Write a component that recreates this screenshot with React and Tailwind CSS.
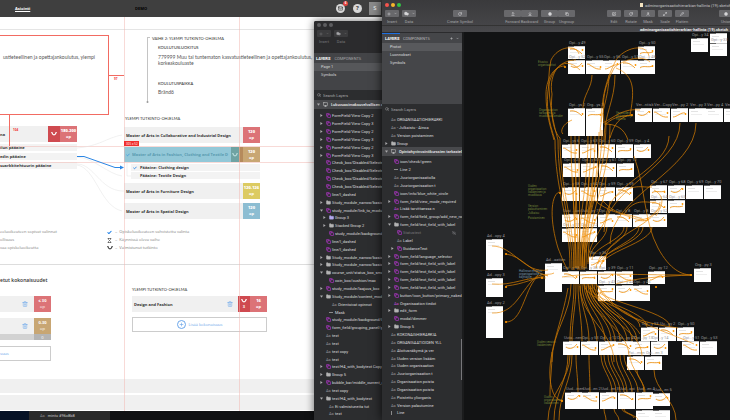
import clsx from 'clsx';
import {
  ArrowDownToLine,
  ArrowUpFromLine,
  Check,
  ChevronDown,
  Cloud,
  Copy,
  EyeOff,
  Folder,
  Hourglass,
  Mail,
  Maximize2,
  Monitor,
  Pencil,
  Plus,
  RotateCw,
  Search,
  SquarePen,
  Squircle,
  Trash2,
  User
} from 'lucide-react';

const ROW_TONES = {
  red: 'bg-[#dc7377]',
  tan: 'bg-[#c8a673]',
  yellow: 'bg-[#dccb62]',
  blue: 'bg-[#8cbdd2]'
};

// [level, kind, name, arrow]
const backLayers = [
  [0, 'symbol', 'FormField/View Copy 2', 'closed'],
  [0, 'symbol', 'FormField/View Copy 3', 'closed'],
  [0, 'symbol', 'FormField/View Copy 2', 'closed'],
  [0, 'symbol', 'FormField/View Copy 3', 'closed'],
  [0, 'symbol', 'FormField/View Copy 2', 'closed'],
  [0, 'symbol', 'FormField/View Copy 3', 'closed'],
  [0, 'symbol', 'Check_box/Disabled/Selected'],
  [0, 'symbol', 'Check_box/Disabled/Selected'],
  [0, 'symbol', 'Check_box/Disabled/Selected'],
  [0, 'symbol', 'Check_box/Disabled/Selected'],
  [0, 'symbol', 'line/l_dashed'],
  [0, 'folder', 'Study_module_narrow/basic', 'closed'],
  [0, 'symbol', 'study_module/link_to_module', 'open'],
  [1, 'violet', 'Group 3', 'closed'],
  [1, 'folder', 'Stacked Group 2', 'closed'],
  [1, 'symbol', 'study_module/background/bg'],
  [0, 'symbol', 'line/l_dashed'],
  [0, 'symbol', 'line/l_dashed'],
  [0, 'folder', 'Study_module_narrow/basic', 'closed'],
  [0, 'folder', 'Study_module_narrow/basic', 'closed'],
  [0, 'folder', 'course_unit/status_box_small', 'open'],
  [1, 'symbol', 'coin_box/cushion/max'],
  [0, 'symbol', 'study_module/laajuus_box', 'closed'],
  [0, 'folder', 'Study_module/content_module', 'open'],
  [2, 'text', 'Orientoivat opinnot'],
  [1, 'line', 'Mask'],
  [0, 'symbol', 'study_module/background/bg_'],
  [0, 'symbol', 'form_field/grouping_panel/gr'],
  [0, 'text', 'text'],
  [0, 'text', 'text'],
  [0, 'text', 'text copy'],
  [0, 'text', 'text'],
  [0, 'symbol', 'text/H4_with_bodytext Copy', 'closed'],
  [0, 'folder', 'Group 5', 'closed'],
  [0, 'symbol', 'bubble_bar/middle_current_ab', 'closed'],
  [0, 'text', 'text copy'],
  [0, 'folder', 'text/H4_with_bodytext', 'open'],
  [1, 'text', 'Ei valmistuneita tut'],
  [1, 'text', 'text']
];

const frontTopLayers = [
  [0, 'text', 'ORGANISAATIOHIERARKI'],
  [0, 'text', '- Julkaistu - Ainoa'],
  [0, 'text', 'Version poistaminen'],
  [0, 'folder', 'Group', 'closed']
];

const frontLayers = [
  [1, 'symbol', 'icon/check/green'],
  [1, 'line', 'Line 2'],
  [1, 'text', 'Juuriorganisaatiolla'],
  [1, 'text', 'Juuriorganisaation t'],
  [1, 'symbol', 'icon/info/blue_white_circle'],
  [1, 'symbol', 'form_field/view_mode_required', 'closed'],
  [1, 'purpleText', 'Lisää tarvittaessa n'],
  [1, 'symbol', 'form_field/field_group/add_new_row', 'closed'],
  [1, 'folder', 'form_field/text_field_with_label', 'open'],
  [2, 'symbol', 'Statustext', 'hidden'],
  [2, 'text', 'Label'],
  [2, 'symbol', 'GuidanceText', 'closed'],
  [1, 'symbol', 'form_field/language_selector', 'closed'],
  [1, 'symbol', 'form_field/text_field_with_label', 'closed'],
  [1, 'symbol', 'form_field/text_field_with_label', 'closed'],
  [1, 'symbol', 'form_field/text_field_with_label', 'closed'],
  [1, 'symbol', 'form_field/text_field_with_label', 'closed'],
  [1, 'symbol', 'button/icon_button/primary_naked', 'closed'],
  [1, 'purpleText', 'Organisaation tiedot'],
  [1, 'folder', 'edit_form', 'closed'],
  [1, 'symbol', 'modal/dimmer'],
  [1, 'folder', 'Group 5', 'closed'],
  [0, 'text', 'KOKONAISHIERARKIA'],
  [0, 'text', 'ORGANISAATIOIDEN YLL'],
  [0, 'text', 'Aloitusnäkymä ja ver'],
  [0, 'text', 'Uuden version lisääm'],
  [0, 'text', 'Uuden organisaation'],
  [0, 'text', 'Juuriorganisaation t'],
  [0, 'text', 'Organisaation poista'],
  [0, 'text', 'Organisaation poista'],
  [0, 'text', 'Poistettu yliorganis'],
  [0, 'text', 'Version palautumine'],
  [0, 'bar', 'Line']
];

// [x, y, height, label]
const artboards = [
  [104, 14, 13, 'Opi...y 49'], [174, 14, 13, 'Opi...y 50'],
  [104, 28, 14, 'Opi...y 52'], [122, 28, 14, 'Opi...y 55'], [139, 28, 14, 'Opi...y 56'],
  [157, 28, 14, 'Opi...y 57'], [174, 28, 14, 'Opi...y 48'],
  [227, 6, 14, 'Opi...y 34'], [246, 1, 23, ''], [246, 11, 13, 'Opi...y 33'],
  [104, 76, 28, 'Opi...ys 2'], [122, 76, 28, 'Org...ys 3'],
  [171, 76, 14, 'Ver...ntisk'], [189, 76, 14, 'Ver...Copy'], [207, 76, 14, 'Ver...py 2'],
  [225, 76, 14, 'Ver...py 3'], [242, 76, 14, 'Ver...py 4'], [260, 76, 14, 'Ver'],
  [98, 112, 14, 'Opi...ys 6'], [116, 112, 14, 'Opi...y 63'], [134, 112, 14, 'Opi...y 60'],
  [152, 112, 14, 'Opi...y 59'], [170, 112, 14, 'Opi...y 4'],
  [99, 131, 14, 'Opi...y 27'], [117, 131, 14, 'Opi...y 60'], [135, 131, 14, 'Opi...y 61'],
  [153, 131, 14, 'Opi...py 12'],
  [98, 155, 14, 'Opi...y 58'], [116, 155, 14, 'Opi...y 64'], [134, 155, 14, 'Opi...y 59'],
  [152, 155, 14, 'Opi...y 59'],
  [186, 153, 14, 'Opi...y 67'], [204, 153, 14, 'Opi...y 68'], [222, 153, 14, 'Opi...y 69'],
  [240, 153, 14, 'Opi...y 70'],
  [186, 168, 13, 'Opi...y 64'], [204, 168, 13, 'Opi...y 65'],
  [98, 182, 13, 'Uusi ...ion'], [116, 182, 13, 'Uud...py 7'], [134, 182, 13, 'Opi...y 7'],
  [151, 182, 13, 'Opi...y 8'], [169, 182, 13, 'Opi...y 8'], [186, 182, 13, 'Opi...y 52'],
  [98, 196, 14, 'Opi...y 11'], [116, 196, 14, 'Opi...y 12'],
  [22, 207, 31, 'Ad...opy 4'], [22, 246, 19, 'Ad...opy 3'], [22, 274, 32, 'Ad...opy 2'],
  [81, 231, 29, 'Ad...aation'], [125, 224, 14, 'Opi...y 36'],
  [98, 239, 13, 'Opi...y 58'], [116, 239, 13, 'Opi...y 38'], [134, 239, 13, 'Opi...y 39'],
  [152, 239, 13, 'Opi...y 11'], [184, 239, 13, 'Opi...py 12'], [230, 236, 14, 'Org...py 3'],
  [134, 253, 16, 'Opi...y 43'], [152, 253, 16, 'Opi...y 44'], [169, 253, 16, 'Opi...y 45'],
  [177, 295, 14, 'Opi...y 53'], [195, 295, 14, 'Uu...py 2'], [213, 295, 14, 'Opi...y 50'],
  [99, 309, 14, 'Uuta...nen'], [117, 309, 14, 'Opi...y 53'], [135, 309, 14, 'Opi...y 12'],
  [152, 309, 14, 'Opi...py 47'], [169, 309, 14, 'Opi...py 13'], [187, 309, 14, 'Opi...y 14'],
  [218, 309, 14, 'Opi...y 51'], [236, 309, 14, 'Opi...y 53'],
  [163, 324, 14, 'Poi...men'], [181, 324, 14, 'Opi...en 3'],
  [101, 360, 17, 'Uud...inen'], [118, 360, 17, 'Uud...en 2'], [136, 360, 17, 'Uud...en 3'],
  [154, 360, 17, 'Uud...opi'], [172, 360, 17, 'Uud...en 4'], [189, 361, 13, 'Uud...en 5'],
  [172, 378, 14, ''], [189, 378, 14, '']
];

const notes = [
  [74, 29, 'green', 'Etusivu\norganisaatiot'],
  [75, 77, 'green', 'Organisaation\ntarkastelu ja\nmuokkauslomake'],
  [152, 80, 'green', 'Versioiden\ntarkastelu ja\nhallinta'],
  [64, 153, 'green', 'Uuden\norganisaation\nlisääminen ja\nmuokkaus'],
  [64, 173, 'green', 'Version\npalauttaminen'],
  [64, 180, 'green', 'Julkaisu'],
  [64, 185, 'green', 'Poistaminen'],
  [55, 238, 'blue', 'Hallinnan etusivu\norganisaatioille ja\nkäyttäjille'],
  [73, 309, 'green', 'Uuden version\nlisääminen'],
  [80, 364, 'green', 'Uuden\norganisaation\nlisääminen']
];

// x1, y1, x2, y2
const links = [
  [91, 108, 106, 236], [94, 108, 108, 238], [96, 106, 110, 238], [107, 104, 112, 236],
  [111, 104, 114, 238], [115, 104, 116, 238], [124, 104, 114, 236], [127, 104, 118, 238],
  [131, 104, 120, 236], [135, 100, 122, 236], [138, 98, 118, 234], [142, 90, 120, 238],
  [146, 92, 124, 232], [128, 43, 119, 76], [145, 43, 136, 104], [151, 43, 140, 108],
  [112, 145, 110, 236], [109, 145, 112, 236], [125, 145, 116, 234], [129, 145, 118, 236],
  [142, 145, 120, 234], [146, 169, 124, 230], [143, 195, 126, 226], [160, 195, 128, 228],
  [163, 195, 134, 232], [175, 195, 138, 232], [188, 195, 136, 236], [179, 195, 132, 236],
  [216, 91, 140, 200], [232, 91, 146, 212], [205, 104, 142, 186], [196, 170, 142, 226],
  [107, 252, 88, 330], [110, 252, 106, 309], [112, 252, 108, 309], [114, 252, 118, 309],
  [116, 252, 125, 309], [118, 252, 133, 309], [120, 252, 141, 309], [122, 252, 147, 309],
  [124, 252, 151, 309], [126, 252, 156, 309], [128, 252, 163, 309], [130, 252, 168, 309],
  [132, 252, 173, 309], [120, 252, 176, 295], [124, 252, 183, 295], [128, 252, 206, 295],
  [116, 254, 150, 330], [122, 254, 165, 324], [126, 254, 178, 324],
  [104, 323, 90, 388], [108, 323, 95, 388], [106, 323, 84, 388], [88, 320, 86, 364],
  [112, 323, 114, 360], [125, 323, 126, 360], [137, 323, 148, 360], [140, 323, 152, 360],
  [144, 323, 156, 360], [147, 323, 160, 360], [152, 323, 163, 360], [156, 323, 168, 360],
  [160, 323, 174, 360], [166, 323, 180, 360], [173, 338, 181, 360], [190, 338, 212, 388],
  [140, 377, 142, 388], [150, 377, 155, 388], [158, 377, 170, 386], [160, 377, 174, 388]
];

const curves = [
  'M115 22C112 12 94 14 87 28C82 48 86 80 94 108',
  'M112 28C98 28 88 38 85 52C81 74 85 90 91 108',
  'M101 34C88 34 82 50 82 62C82 84 87 96 90 108',
  'M116 38C98 20 84 42 88 62C86 84 90 100 96 106',
  'M185 24C182 10 160 16 152 28C144 44 138 60 137 90',
  'M186 30C178 22 158 28 150 36C140 56 138 66 140 90',
  'M152 36C172 44 170 60 166 84',
  'M142 92C150 84 160 84 168 83',
  'M139 91C152 84 160 76 176 78',
  'M140 92C152 92 160 96 164 108',
  'M146 106C150 92 156 84 168 83',
  'M99 102C96 100 98 92 108 88',
  'M95 160C86 164 86 190 94 216C98 226 100 232 104 238',
  'M42 222C58 224 66 240 84 244',
  'M28 214C50 214 60 242 84 238',
  'M28 252C50 254 62 244 82 246',
  'M42 254C60 252 70 246 84 243',
  'M42 290C58 290 60 260 72 246',
  'M28 281C52 282 56 258 74 243',
  'M72 246C78 240 84 244 90 241',
  'M170 124C182 158 180 190 194 216C206 238 218 243 228 243',
  'M152 252C170 246 200 244 228 243',
  'M98 245C130 240 160 243 226 243',
  'M130 168C144 180 160 182 172 187C186 190 190 180 196 176',
  'M138 168C154 186 164 180 180 188',
  'M150 166C170 150 178 156 188 155',
  'M160 182C172 164 184 172 192 170',
  'M190 158C204 166 196 176 192 184',
  'M132 252C150 282 172 290 214 296',
  'M134 254C160 290 190 294 230 312',
  'M126 254C146 290 164 282 176 302',
  'M104 256C98 290 84 320 86 346C88 366 94 368 99 369'
];

const screenCurves = [
  'M2 3C7 2 11 5 14 8',
  'M2 8C5 5 10 8 15 6',
  'M3 6C7 9 11 7 14 3',
  'M1 4C5 4 8 10 15 9',
  'M2 9C6 9 10 4 14 5'
];

function Fold({ state }) {
  return (
    <svg viewBox="0 0 4 4" className="size-[3px] shrink-0 fill-[#a9a9ab]">
      {state === 'closed' && <path d="M0.5 0L3.5 2L0.5 4Z" />}
      {state === 'open' && <path d="M0 0.5H4L2 3.7Z" />}
    </svg>
  );
}

function LayerIcon({ kind }) {
  if (kind === 'symbol') return <Copy className="size-[5px] text-[#9a35ae]" strokeWidth={4} />;
  if (kind === 'folder') return <Folder className="size-[5px] fill-[#b3b3b3] text-[#b3b3b3]" />;
  if (kind === 'violet') return <Folder className="size-[5px] fill-[#b3a9f0] text-[#b3a9f0]" />;
  if (kind === 'line') return <span className="h-px w-[4px] bg-[#8b8b8b]" />;
  if (kind === 'bar') return <span className="h-[4px] w-px bg-[#8b8b8b]" />;
  return <span className={kind === 'purpleText' ? 'text-[#c04ad4]' : 'text-[#939396]'}>Aa</span>;
}

function LayerList({ items, className }) {
  return (
    <ul className={clsx('flex flex-col', className)}>
      {items.map(([level, kind, name, state], i) => (
        <li
          key={i}
          className={clsx(
            'flex min-h-0 flex-1 items-center whitespace-nowrap',
            level === 0 && 'pl-[3px]',
            level === 1 && 'pl-[6px]',
            level === 2 && 'pl-[9px]',
            state === 'hidden' ? 'text-[#77777a]' : 'text-[#dcdcde]'
          )}
        >
          <Fold state={state} />
          <span className="ml-[3px] flex w-[6px] shrink-0 items-center">
            <LayerIcon kind={kind} />
          </span>
          <span>{name}</span>
          {state === 'hidden' && <EyeOff className="mr-[6px] ml-auto size-[4px]" strokeWidth={3} />}
        </li>
      ))}
    </ul>
  );
}

function ArtboardTitle({ name }) {
  return (
    <div className="flex h-[9px] shrink-0 items-center bg-[#48494c] pl-[3px] font-medium whitespace-nowrap text-[#ececec]">
      <Fold state="open" />
      <Monitor className="mx-[3px] size-[5px] shrink-0" strokeWidth={2} />
      {name}
    </div>
  );
}

function SearchLayers({ id }) {
  return (
    <label htmlFor={id} className="flex h-[10px] shrink-0 items-center gap-[2px] pl-[3px] text-[#9c9c9f]">
      <Search className="size-[4px]" strokeWidth={3} />
      <input
        id={id}
        type="search"
        placeholder="Search Layers"
        className="w-[60px] bg-transparent outline-none placeholder:text-[#a8a8ab]"
      />
    </label>
  );
}

function ToolButton({ label, wide, dim, children }) {
  return (
    <button
      type="button"
      className={clsx('flex flex-col items-center gap-[2px]', dim ? 'text-[#77777a]' : 'text-[#a5a5a8]')}
    >
      <span
        className={clsx(
          'flex h-[7px] items-center justify-center gap-[3px] rounded-[1px]',
          wide ? 'w-[17px]' : 'w-[14px]',
          dim ? 'bg-[#3b3b3d]' : 'bg-[#68686b] text-[#d6d6d8]'
        )}
      >
        {children}
      </span>
      <span className="h-[5px] w-0 text-center">
        <span className="flex justify-center whitespace-nowrap">{label}</span>
      </span>
    </button>
  );
}

function Credits({ value, tone }) {
  return (
    <span
      className={clsx(
        'flex w-[17px] shrink-0 flex-col items-center justify-center self-stretch leading-[6px] text-white',
        ROW_TONES[tone]
      )}
    >
      <b className="whitespace-nowrap">{value}</b>
      <span>op</span>
    </span>
  );
}

function Cap() {
  return (
    <svg viewBox="0 0 6 4" className="h-[4px] w-[6px] fill-none stroke-current">
      <path d="M0 0.8H1.2C1.5 3.6 4.5 3.6 4.8 0.8H6" strokeWidth="1.1" />
    </svg>
  );
}

function Programme({ name, value, tone }) {
  return (
    <li className="flex h-[16px] items-center bg-[#f0f0f0] pl-[2px] font-bold text-[#333]">
      <span className="flex-1 whitespace-nowrap">{name}</span>
      <Credits value={value} tone={tone} />
    </li>
  );
}

function AddButton({ children }) {
  return (
    <button
      type="button"
      className="flex h-[15px] w-full items-center justify-center gap-[3px] border border-[#ccc] text-[#6ba6ea]"
    >
      {children}
    </button>
  );
}

function PortalHeader() {
  return (
    <header className="flex h-[17px] shrink-0 items-center bg-[#3f3f3f] pl-[15px] text-[4px] text-white">
      <a href="#asiointi" className="w-[120px] font-bold underline">
        Asiointi
      </a>
      <span className="w-[201px] font-bold text-black">DEMO</span>
      <button
        type="button"
        aria-label="Viestit"
        className="relative flex size-[9px] items-center justify-center rounded-full bg-[#d8d8d8] text-[#3f3f3f]"
      >
        <Mail className="size-[5px]" strokeWidth={3} />
        <span className="absolute -top-[3px] -right-[3px] flex size-[5px] items-center justify-center rounded-full bg-[#e2443f] text-[3px] font-bold text-white">
          6
        </span>
      </button>
      <button
        type="button"
        className="ml-[8px] flex size-[9px] items-center justify-center rounded-full bg-[#d8d8d8] text-[6px] font-bold text-[#3f3f3f]"
      >
        ?
      </button>
      <span className="ml-[7px] flex h-[13px] w-[12px] items-center justify-center bg-[#8b8b8b] text-[6px]">S</span>
    </header>
  );
}

function StudyRight() {
  return (
    <section className="grid grid-cols-[124px_136px_1fr] border-t border-[#e5e5e5]">
      <div className="pt-[5px]">
        <div className="flex h-[80px] w-[109px] items-start justify-end border border-l-0 border-[#f26b62] pt-[18px] pr-[13px] font-[Lato,sans-serif] text-[5px] leading-[6px] whitespace-nowrap">
          ustieteellinen ja opettajankoulutus, ylempi
        </div>
        <ul className="mt-[11px] flex w-[77px] flex-col gap-[2px] font-bold text-[#333]">
          <li className="flex h-[16px] items-center bg-[#f0f0f0]">
            <span className="flex-1">na</span>
            <span className="flex w-[12px] items-center justify-center self-stretch bg-[#cf4a50] text-white">
              <Cap />
            </span>
            <Credits value="180-200" tone="red" />
          </li>
          <li className="h-[7px] bg-[#f3f3f3] leading-[7px] whitespace-nowrap">ilun pääaine</li>
          <li className="h-[7px] bg-[#f3f3f3] leading-[7px] whitespace-nowrap">edin pääaine</li>
          <li className="h-[7px] bg-[#f3f3f3] leading-[7px] whitespace-nowrap">suarkkitehtuurin pääaine</li>
        </ul>
      </div>

      <div className="pt-[7px]">
        <div className="ml-[23px] h-[65px] border-l border-[#c4c4c4] pl-[4px] font-[Lato,sans-serif] whitespace-nowrap text-[#333]">
          <h2 className="leading-[4px]">VAIHE 2: YLEMPI TUTKINTO-OHJELMA</h2>
          <dl className="pl-[6px]">
            <dt className="mt-[4px] leading-[6px] font-medium">KOULUTUSLUOKITUS</dt>
            <dd className="mt-[3px] text-[5px] leading-[6px] text-[#555]">
              779999 Muu tai tuntematon kasvatustieteellinen ja opettajankoulutus,
              <br />
              korkeakouluaste
            </dd>
            <dt className="mt-[15px] leading-[6px] font-medium">KOULUTUSPAIKKA</dt>
            <dd className="mt-[2px] text-[5px] leading-[6px] text-[#555]">Brändö</dd>
          </dl>
        </div>
        <h3 className="mt-[14px] pl-px font-[Lato,sans-serif] leading-[6px] text-[#333]">YLEMPI TUTKINTO-OHJELMA</h3>
        <ul className="mt-[5px] flex flex-col gap-[4px]">
          <Programme name="Master of Arts in Collaborative and Industrial Design" value="120" tone="red" />
          <li>
            <div className="flex h-[15px] items-center bg-[#93c8d8] pl-[2px] font-bold text-[#5a9bb0]">
              <Check className="mr-[2px] size-[4px] shrink-0 text-[#2f8fe0]" strokeWidth={4} />
              <span className="min-w-0 flex-1 overflow-hidden whitespace-nowrap">
                Master of Arts in Fashion, Clothing and Textile D
              </span>
              <span className="flex w-[8px] items-center justify-center self-stretch bg-[#6fa3a3] text-[#b9dcdc]">
                <Cap />
              </span>
              <span className="w-[4px] self-stretch bg-[#b58a5c]" />
              <Credits value="120" tone="tan" />
            </div>
            <ul className="mt-[2px] ml-[7px] flex flex-col gap-px font-bold text-[#333]">
              <li className="flex h-[7px] items-center gap-[3px] bg-[#f3f3f3] pl-[2px]">
                <Check className="size-[4px] text-[#1b7fe8]" strokeWidth={5} />
                Pääaine: Clothing design
              </li>
              <li className="flex h-[7px] items-center bg-[#f3f3f3] pl-[9px]">Pääaine: Textile Design</li>
            </ul>
          </li>
          <Programme name="Master of Arts in Furniture Design" value="120-126" tone="yellow" />
          <Programme name="Master of Arts in Spatial Design" value="120" tone="blue" />
        </ul>
      </div>
    </section>
  );
}

function Legend() {
  return (
    <section className="grid grid-cols-[107px_1fr] border-b border-[#ddd] pt-[9px] pb-[12px] leading-[8px] text-[#7d7d7d]">
      <ul className="whitespace-nowrap">
        <li>eeluoikeuteen sopivat valinnat</li>
        <li>ollisuus</li>
        <li>vaa opiskeluoikeutta</li>
      </ul>
      <ul>
        <li className="flex items-center">
          <Check className="size-[5px] text-[#1b7fe8]" strokeWidth={5} />
          <span className="ml-[3px]">= &nbsp;Opiskeluoikeuteen vahvistettu valinta</span>
        </li>
        <li className="flex items-center">
          <Hourglass className="size-[5px] text-[#444]" strokeWidth={3} />
          <span className="ml-[3px]">= &nbsp;Käynnissä oleva vaihe</span>
        </li>
        <li className="flex items-center">
          <span className="w-[5px] text-[#444]">
            <Cap />
          </span>
          <span className="ml-[3px]">= &nbsp;Valmistunut tutkinto</span>
        </li>
      </ul>
    </section>
  );
}

function Modules() {
  return (
    <section className="grid h-[114px] grid-cols-[132px_135px] pt-[12px]">
      <div className="w-[51px]">
        <h2 className="h-[19px] text-[5px] leading-[6px] font-semibold whitespace-nowrap text-[#333]">
          etut kokonaisuudet
        </h2>
        <div className="flex h-[16px] items-center bg-[#f0f0f0]">
          <button type="button" aria-label="Poista" className="ml-[22px] flex-1 text-[#6ba6ea]">
            <Trash2 className="size-[6px]" />
          </button>
          <Credits value="≤ 30" tone="red" />
        </div>
        <div className="mt-[6px] flex h-[16px] items-center bg-[#f0f0f0]">
          <button type="button" aria-label="Poista" className="ml-[22px] flex-1 text-[#6ba6ea]">
            <Trash2 className="size-[6px]" />
          </button>
          <Credits value="0-30" tone="tan" />
        </div>
        <div className="mb-[6px] flex h-[6px] justify-end bg-[#d2d2d2]">
          <span className="flex w-[17px] items-center justify-center bg-[#b4b4b4] text-white">0</span>
        </div>
        <button
          type="button"
          className="h-[15px] w-full border border-l-0 border-[#ccc] text-left text-[#6ba6ea]"
        >
          suus
        </button>
      </div>
      <div className="pt-[10px]">
        <h3 className="font-[Lato,sans-serif] leading-[6px] text-[#333]">YLEMPI TUTKINTO-OHJELMA</h3>
        <div className="mt-[3px] mb-[5px] flex h-[16px] items-center bg-[#f0f0f0] pl-[2px] font-bold text-[#333]">
          <span className="flex-1">Design and Fashion</span>
          <button type="button" aria-label="Poista" className="mr-[5px] text-[#6ba6ea]">
            <Trash2 className="size-[6px]" />
          </button>
          <span className="flex w-[12px] flex-col items-center justify-center gap-px self-stretch bg-[#cf4a50] leading-[5px] text-white">
            <Cap />
            <span>3</span>
          </span>
          <Credits value="16" tone="red" />
        </div>
        <AddButton>
          <span className="flex size-[9px] items-center justify-center rounded-full border border-[#6ba6ea]">
            <Plus className="size-[5px]" strokeWidth={3} />
          </span>
          Lisää kokonaisuus
        </AddButton>
      </div>
    </section>
  );
}

// Spec guides and dimensions laid over the portal page
function Guides() {
  return (
    <svg className="pointer-events-none absolute inset-0 size-full fill-none">
      <g stroke="#f2b5b0" strokeWidth="1" opacity="0.5">
        <path d="M124.5 17V411M239.5 17V411M0 146.5H330M0 162.5H330" />
      </g>
      <g stroke="#f26b62">
        <path d="M108 75.5H124M9.5 115V146" />
      </g>
      <g stroke="#e3e3e3" strokeWidth="0.5">
        <path d="M77 148C100 146 106 138 122 135M77 164C94 164 100 190 122 191M77 165C96 168 100 206 122 211M77 157C94 158 108 174 122 176M127 163V176H131M122 191H124" />
      </g>
      <path d="M77 156.5H84L115 167.5H121" stroke="#2b86e4" />
      <path d="M120 165.5L124 167.5L120 169.5Z" className="fill-[#2b86e4]" />
      <circle cx="147.5" cy="102" r="1" className="fill-[#999]" />
      <path d="M148 37.5H150" stroke="#c4c4c4" />
      <rect x="124" y="141" width="15" height="5" className="fill-[#f02e2e]" />
      <text x="126" y="145" className="fill-white text-[3px]">365 x 52</text>
      <text x="114" y="80" className="fill-[#f02e2e] text-[3px] font-bold">97</text>
      <text x="13" y="131" className="fill-[#f02e2e] text-[3px] font-bold">104</text>
    </svg>
  );
}

function Portal() {
  return (
    <main className="absolute top-0 left-0 flex w-full flex-col bg-white font-['Open_Sans',sans-serif] text-[4px] leading-[5px] text-[#555]">
      <PortalHeader />
      <div className="h-[12px]" />
      <StudyRight />
      <Legend />
      <Modules />
      <footer className="flex flex-col gap-[2px] pb-px">
        <div className="h-[14px] bg-[#f0f0f0]" />
        <div className="h-[15px] bg-[#f0f0f0]" />
      </footer>
      <Guides />
    </main>
  );
}

function BackWindow() {
  return (
    <aside className="absolute top-[21px] right-0 bottom-0 left-[314px] flex flex-col overflow-hidden rounded-tl-[2px] bg-[#2c2d2f] shadow-[0_0_8px_rgba(0,0,0,0.6)]">
      <div className="flex h-[32px] shrink-0 flex-col bg-[#2b2b2d] pl-[3px]">
        <div className="flex gap-[2px] pt-[2px] pb-[3px]">
          <i className="size-[4px] rounded-full bg-[#5d5d5f]" />
          <i className="size-[4px] rounded-full bg-[#5d5d5f]" />
          <i className="size-[4px] rounded-full bg-[#5d5d5f]" />
        </div>
        <div className="flex gap-[3px]">
          <ToolButton label="Insert" dim>
            <Plus className="size-[4px]" strokeWidth={3} />
            <ChevronDown className="size-[3px]" strokeWidth={3} />
          </ToolButton>
          <ToolButton label="Data" dim>
            <Cloud className="size-[5px] fill-[#a5a5a8]" />
            <ChevronDown className="size-[3px]" strokeWidth={3} />
          </ToolButton>
        </div>
      </div>
      <div className="h-[37px] shrink-0 bg-[#434447] text-[#d4d4d6]">
        <div className="flex h-[10px] items-center gap-[4px] pl-[2px]">
          <button type="button" className="font-bold text-white">LAYERS</button>
          <button type="button" className="text-[#a5a5a8]">COMPONENTS</button>
        </div>
        <ul className="leading-[8px]">
          <li className="bg-[#56575a] pl-[7px]">Page 1</li>
          <li className="pl-[7px]">Symbols</li>
        </ul>
      </div>
      <SearchLayers id="search-back" />
      <ArtboardTitle name="Lukuvuosimaksuvelvollisen opi" />
      <LayerList items={backLayers} className="mt-[3px] mb-[2px] min-h-0 flex-1 pl-[3px]" />
    </aside>
  );
}

function Toolbar() {
  return (
    <header className="h-[32px] shrink-0 bg-linear-to-b from-[#3a3a3c] to-[#48484b]">
      <div className="flex h-[10px] items-center gap-[2px] overflow-hidden pl-[3px]">
        <i className="size-[4px] rounded-full bg-[#f5544d]" />
        <i className="size-[4px] rounded-full bg-[#f7b52c]" />
        <i className="size-[4px] rounded-full bg-[#31c544]" />
        <span className="ml-auto h-[4px] w-[3px] shrink-0 bg-[#f4e3c0]" />
        <span className="w-[85px] shrink-0 text-[4px] whitespace-nowrap text-[#c6c6c8]">
          adminorganisaatiohierarkian-hallinta (19).sketch
        </span>
      </div>
      <nav className="flex h-[15px] overflow-hidden pl-[3px]">
        <div className="flex gap-[3px]">
          <ToolButton label="Insert">
            <Plus className="size-[4px]" strokeWidth={3} />
            <ChevronDown className="size-[3px]" strokeWidth={3} />
          </ToolButton>
          <ToolButton label="Data">
            <Cloud className="size-[5px] fill-current" />
            <ChevronDown className="size-[3px]" strokeWidth={3} />
          </ToolButton>
        </div>
        <div className="ml-[37px]">
          <ToolButton label="Create Symbol">
            <RotateCw className="size-[4px]" strokeWidth={3} />
          </ToolButton>
        </div>
        <div className="ml-[37px] flex">
          <ToolButton label="Forward" wide>
            <ArrowUpFromLine className="size-[4px]" strokeWidth={3} />
          </ToolButton>
          <ToolButton label="Backward" wide>
            <ArrowDownToLine className="size-[4px]" strokeWidth={3} />
          </ToolButton>
          <div className="ml-[3px] flex">
            <ToolButton label="Group" wide>
              <Squircle className="size-[4px] fill-current" />
            </ToolButton>
            <ToolButton label="Ungroup" wide>
              <Copy className="size-[4px]" strokeWidth={3} />
            </ToolButton>
          </div>
        </div>
        <div className="ml-auto flex shrink-0 gap-[3px]">
          <ToolButton label="Edit">
            <SquarePen className="size-[4px]" strokeWidth={3} />
          </ToolButton>
          <ToolButton label="Rotate">
            <RotateCw className="size-[4px]" strokeWidth={3} />
          </ToolButton>
          <ToolButton label="Mask">
            <User className="size-[4px]" strokeWidth={3} />
          </ToolButton>
          <ToolButton label="Scale">
            <Maximize2 className="size-[4px]" strokeWidth={3} />
          </ToolButton>
          <ToolButton label="Flatten">
            <Pencil className="size-[4px]" strokeWidth={3} />
          </ToolButton>
        </div>
        <div className="ml-[30px] w-[11px] shrink-0">
          <ToolButton label="Union">
            <Squircle className="size-[4px] fill-current" />
          </ToolButton>
        </div>
      </nav>
      <div className="flex h-[7px] items-center justify-end border-t border-[#333] pr-[2px] text-[4px] font-bold text-[#ededed]">
        adminorganisaatiohierarkian-hallinta (19).sketch
      </div>
    </header>
  );
}

function Canvas() {
  return (
    <div className="relative min-w-0 flex-1 overflow-hidden bg-[#121314]">
      {artboards.map(([x, y, h, label], i) => (
        <div key={i} className="absolute w-[17px] bg-white" style={{ left: x, top: y, height: h }}>
          <div className="absolute -top-[6px] left-px leading-[5px] whitespace-nowrap text-[#97979a]">{label}</div>
          <div className="h-px w-full bg-[#c9c9c9]">
            <div className="h-px w-[6px] bg-[#666]" />
          </div>
          <div className="mt-[2px] ml-[2px] h-px w-[7px] bg-[#e3e3e3]" />
          <div className="mt-[2px] ml-[2px] h-px w-[11px] bg-[#eee]" />
        </div>
      ))}
      {notes.map(([x, y, tone, text]) => (
        <p
          key={text}
          className={clsx(
            'absolute text-[3px] leading-[3px] whitespace-pre',
            tone === 'green' ? 'text-[#6f8038]' : 'text-[#7795ad]'
          )}
          style={{ left: x, top: y }}
        >
          {text}
        </p>
      ))}
      <svg className="absolute inset-0 size-full fill-none stroke-[#f08c00]" strokeWidth="0.8">
        <g opacity="0.8">
          {links.map(([x1, y1, x2, y2], i) => {
            const bend = (y2 - y1) * 0.4;
            return <path key={i} d={`M${x1} ${y1}C${x1} ${y1 + bend} ${x2} ${y2 - bend} ${x2} ${y2}`} />;
          })}
          {curves.map((d) => (
            <path key={d} d={d} />
          ))}
        </g>
        {artboards.map(([x, y, h, label], i) =>
          label && x < 222 && x > 90 ? (
            <g key={i} transform={`translate(${x} ${y})`}>
              <path d={screenCurves[i % screenCurves.length]} />
              <circle cx="14.5" cy={4 + (i % 4)} r="0.9" stroke="none" className="fill-[#ff9500]" />
            </g>
          ) : null
        )}
        <g stroke="none" className="fill-[#ff9500]">
          <circle cx="101" cy="35" r="1.1" />
          <circle cx="168" cy="83" r="1.1" />
          <circle cx="96" cy="161" r="1.1" />
          <circle cx="42" cy="222" r="1.1" />
          <circle cx="42" cy="255" r="1.1" />
          <circle cx="42" cy="290" r="1.1" />
          <circle cx="78" cy="246" r="1.1" />
          <circle cx="227" cy="243" r="1.1" />
          <circle cx="98" cy="369" r="1.1" />
          <circle cx="192" cy="255" r="1.1" />
        </g>
      </svg>
    </div>
  );
}

function FrontWindow() {
  return (
    <section className="absolute inset-y-0 right-0 left-[382px] flex flex-col bg-[#2c2d2f] shadow-[0_0_10px_rgba(0,0,0,0.8)]">
      <Toolbar />
      <div className="flex min-h-0 flex-1">
        <aside className="relative flex w-[82px] shrink-0 flex-col overflow-hidden border-r-2 border-[#1b1c1d]">
          <div className="h-[72px] shrink-0 bg-[#454649] text-[#dcdcde]">
            <div className="flex h-[11px] items-center border-t border-[#2b2b2d] pr-[3px]">
              <button type="button" className="h-full w-[18px] border-t border-[#1d6fe0] pl-[3px] text-left font-bold text-white">
                LAYERS
              </button>
              <button type="button" className="ml-[3px] flex-1 text-left text-[#b5b5b8]">
                COMPONENTS
              </button>
              <Plus className="size-[3px]" strokeWidth={3} />
              <ChevronDown className="ml-[3px] size-[3px]" strokeWidth={3} />
            </div>
            <ul className="leading-[8px]">
              <li className="bg-[#58595c] pl-[8px]">Protot</li>
              <li className="pl-[8px]">Luonnokset</li>
              <li className="pl-[8px]">Symbols</li>
            </ul>
          </div>
          <SearchLayers id="search-front" />
          <LayerList items={frontTopLayers} className="mt-px h-[32px] shrink-0" />
          <ArtboardTitle name="Opintohyvinvointikurssien tarkastel..." />
          <LayerList items={frontLayers} className="mt-[2px] mb-[3px] min-h-0 flex-1" />
          <span className="absolute right-0 bottom-[40px] h-[41px] w-px bg-[#77777a]" />
        </aside>
        <Canvas />
      </div>
    </section>
  );
}

export default function App() {
  return (
    <div className="relative h-screen w-full overflow-hidden bg-[#111214] font-[Roboto,sans-serif] text-[4px] leading-[5px]">
      <div className="absolute inset-x-0 bottom-0 flex h-[10px] text-[#c9c9c9]">
        <div className="w-[29px] bg-[#061226]" />
        <div className="flex w-[81px] items-center gap-[3px] bg-[#2b2b2b] pl-[11px]">
          <span className="text-[#888]">Aa</span>
          mintu #96c8b8
        </div>
      </div>
      <Portal />
      <BackWindow />
      <FrontWindow />
    </div>
  );
}
